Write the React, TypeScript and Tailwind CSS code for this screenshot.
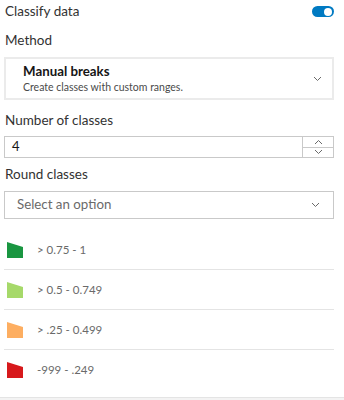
import React from "react";

const classes = [
  { color: "#1a9641", label: "> 0.75 - 1" },
  { color: "#a6d96a", label: "> 0.5 - 0.749" },
  { color: "#fdae61", label: "> .25 - 0.499" },
  { color: "#d7191c", label: "-999 - .249" },
];

const Chevron = ({ up = false }: { up?: boolean }) => (
  <svg width="9" height="6" viewBox="0 0 9 6" fill="none" stroke="#6a6a6a" strokeWidth="1">
    <path d={up ? "M1 5L4.5 1.5L8 5" : "M1 1L4.5 4.5L8 1"} />
  </svg>
);

const Swatch = ({ color }: { color: string }) => (
  <svg width="16" height="16" viewBox="0 0 16 16">
    <polygon points="0,0 16,5 16,16 0,16" fill={color} />
  </svg>
);

export default function App() {
  return (
    <div className="w-[344px] h-[400px] bg-white overflow-hidden font-['Lato','Open_Sans',sans-serif] text-[#323232]">
      <div className="ml-1 w-[330px]">
        {/* classify toggle */}
        <div className="flex items-center justify-between h-[23px] pl-px">
          <span className="text-[13.5px]">Classify data</span>
          <span className="w-[22px] h-[11px] rounded-full bg-[#007ac2] flex items-center justify-end pr-[2px]">
            <span className="w-[8px] h-[8px] rounded-full bg-white" />
          </span>
        </div>

        <div className="h-[34px] flex items-center pl-px text-[13.5px]">Method</div>

        {/* method select */}
        <div className="h-[43px] border-2 border-[#ebebeb] flex items-center justify-between pl-[17px] pr-[10px]">
          <div className="flex flex-col">
            <span className="text-[13.3px] font-bold leading-[17px] text-[#151515]">Manual breaks</span>
            <span className="text-[10.5px] leading-[14px] text-[#4a4a4a]">Create classes with custom ranges.</span>
          </div>
          <Chevron />
        </div>

        <div className="h-[36px] flex items-center pl-px pt-1 text-[13.5px]">Number of classes</div>

        {/* number input */}
        <div className="h-[22px] border border-[#c9c9c9] flex">
          <div className="flex-1 flex items-center pl-[7px] text-[13px] text-[#151515]">4</div>
          <div className="w-[31px] border-l border-[#c9c9c9] flex flex-col">
            <div className="flex-1 flex items-center justify-center border-b border-[#c9c9c9]">
              <Chevron up />
            </div>
            <div className="flex-1 flex items-center justify-center">
              <Chevron />
            </div>
          </div>
        </div>

        <div className="h-[33px] flex items-center pl-px text-[13.5px]">Round classes</div>

        {/* round select */}
        <div className="h-[28px] border border-[#c9c9c9] flex items-center justify-between pl-[12px] pr-[13px]">
          <span className="text-[13.3px] text-[#6a6a6a]">Select an option</span>
          <Chevron />
        </div>

        {/* legend */}
        <div className="mt-[11px] mb-[7px]">
          {classes.map((c, i) => (
            <div
              key={c.label}
              className={`flex items-center gap-[14px] pl-[3px] h-[40px] ${i === 3 ? "" : "border-b border-[#e4e4e4]"}`}
            >
              <Swatch color={c.color} />
              <span className="text-[11.5px] text-[#6a6a6a]">{c.label}</span>
            </div>
          ))}
        </div>
      </div>
      <div className="h-[4px] bg-[#f3f3f3] border-t border-[#e4e4e4]" />
    </div>
  );
}
